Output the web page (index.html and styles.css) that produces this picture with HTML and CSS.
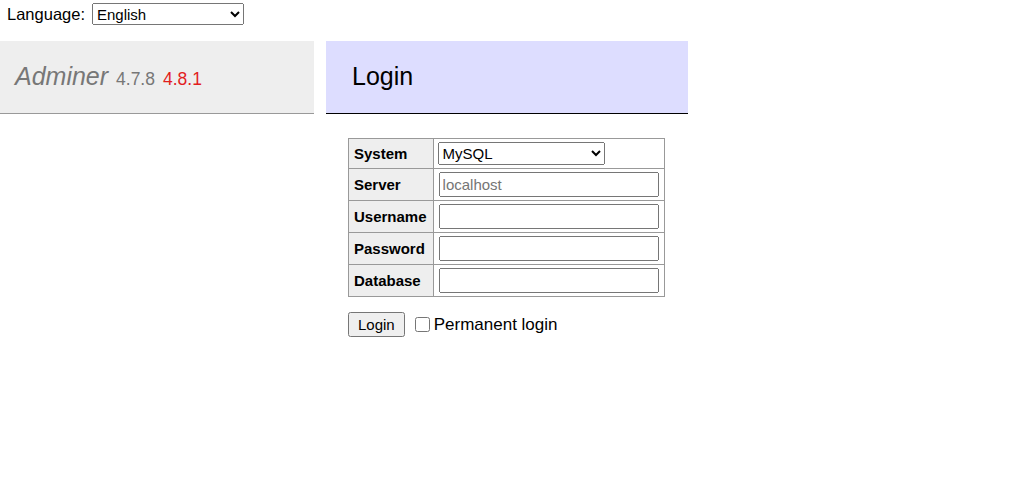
FILE: index.html
```html
<!DOCTYPE html>
<html>

<head>
  <title>Login - Adminer</title>
  <link rel="stylesheet" href="styles.css">
</head>

<body>

  <div class="lang-bar">
    Language:
    <select class="lang-select">
      <option>English</option>
      <option>Deutsch</option>
      <option>Français</option>
    </select>
  </div>

  <div class="layout">
    <div class="menu">
      <h1 class="logo">
        <span class="logo-name">Adminer</span>
        <span class="version">4.7.8</span>
        <span class="version-new">4.8.1</span>
      </h1>
    </div>

    <div class="content">
      <h2 class="page-title">Login</h2>

      <form>
        <table class="login-table">
          <tr>
            <th>System</th>
            <td>
              <select class="sys-select">
                <option>MySQL</option>
                <option>SQLite 3</option>
                <option>PostgreSQL</option>
              </select>
            </td>
          </tr>
          <tr>
            <th>Server</th>
            <td><input class="field" type="text" placeholder="localhost"></td>
          </tr>
          <tr>
            <th>Username</th>
            <td><input class="field" type="text"></td>
          </tr>
          <tr>
            <th>Password</th>
            <td><input class="field" type="password"></td>
          </tr>
          <tr>
            <th>Database</th>
            <td><input class="field" type="text"></td>
          </tr>
        </table>

        <div class="login-row">
          <button type="button" class="btn-login">Login</button>
          <label class="permanent">
            <input type="checkbox" class="chk">
            Permanent login
          </label>
        </div>
      </form>
    </div>
  </div>

</body>

</html>
```

FILE: styles.css
```css
body {
  margin: 0;
  color: #000;
  background: #fff;
  font-family: "Liberation Sans", Arial, sans-serif;
  font-size: 16.5px;
}

.lang-bar {
  display: flex;
  align-items: center;
  gap: 7px;
  height: 28px;
  padding-left: 7px;
}

.lang-select {
  width: 152px;
  height: 22px;
  font-family: "Liberation Sans", Arial, sans-serif;
  font-size: 15px;
}

.layout {
  display: flex;
  align-items: flex-start;
  margin-top: 13px;
}

.menu {
  width: 314px;
}

.logo {
  margin: 0;
  padding: 20px 15px 18px;
  line-height: 31px;
  font-size: 25px;
  font-weight: normal;
  color: #777;
  background: #eee;
  border-bottom: 1px solid #999;
}

.logo-name {
  font-style: italic;
}

.version {
  font-size: 17.5px;
  color: #777;
  margin-left: 1px;
}

.version-new {
  font-size: 17.5px;
  color: #e21e1e;
  margin-left: 1px;
}

.content {
  width: 362px;
  margin-left: 12px;
}

.page-title {
  margin: 0;
  padding: 20px 26px 21px;
  line-height: 31px;
  font-size: 25px;
  font-weight: normal;
  color: #000;
  background: #ddf;
  border-bottom: 1px solid #000;
}

.login-table {
  margin: 24px 0 0 22px;
  border-collapse: collapse;
  border-top: 1px solid #999;
  border-left: 1px solid #999;
  font-size: 15px;
}

.login-table th,
.login-table td {
  border: 1px solid #999;
  border-width: 0 1px 1px 0;
  padding: 3px 5px;
}

.login-table th {
  background: #eee;
  text-align: left;
  padding-right: 6px;
}

.sys-select {
  width: 167px;
  height: 23px;
  margin-left: -1px;
  font-family: "Liberation Sans", Arial, sans-serif;
  font-size: 15px;
}

.field {
  box-sizing: border-box;
  width: 220px;
  height: 25px;
  margin: 0;
  font-family: "Liberation Sans", Arial, sans-serif;
  font-size: 15px;
}

.login-row {
  display: flex;
  align-items: center;
  margin: 15px 0 0 22px;
}

.btn-login {
  height: 25px;
  padding: 1px 8px;
  font-family: "Liberation Sans", Arial, sans-serif;
  font-size: 15px;
}

.permanent {
  display: flex;
  align-items: center;
  margin-left: 10px;
  font-size: 17px;
}

.chk {
  width: 15px;
  height: 15px;
  margin: 0 4px 0 0;
}
```
